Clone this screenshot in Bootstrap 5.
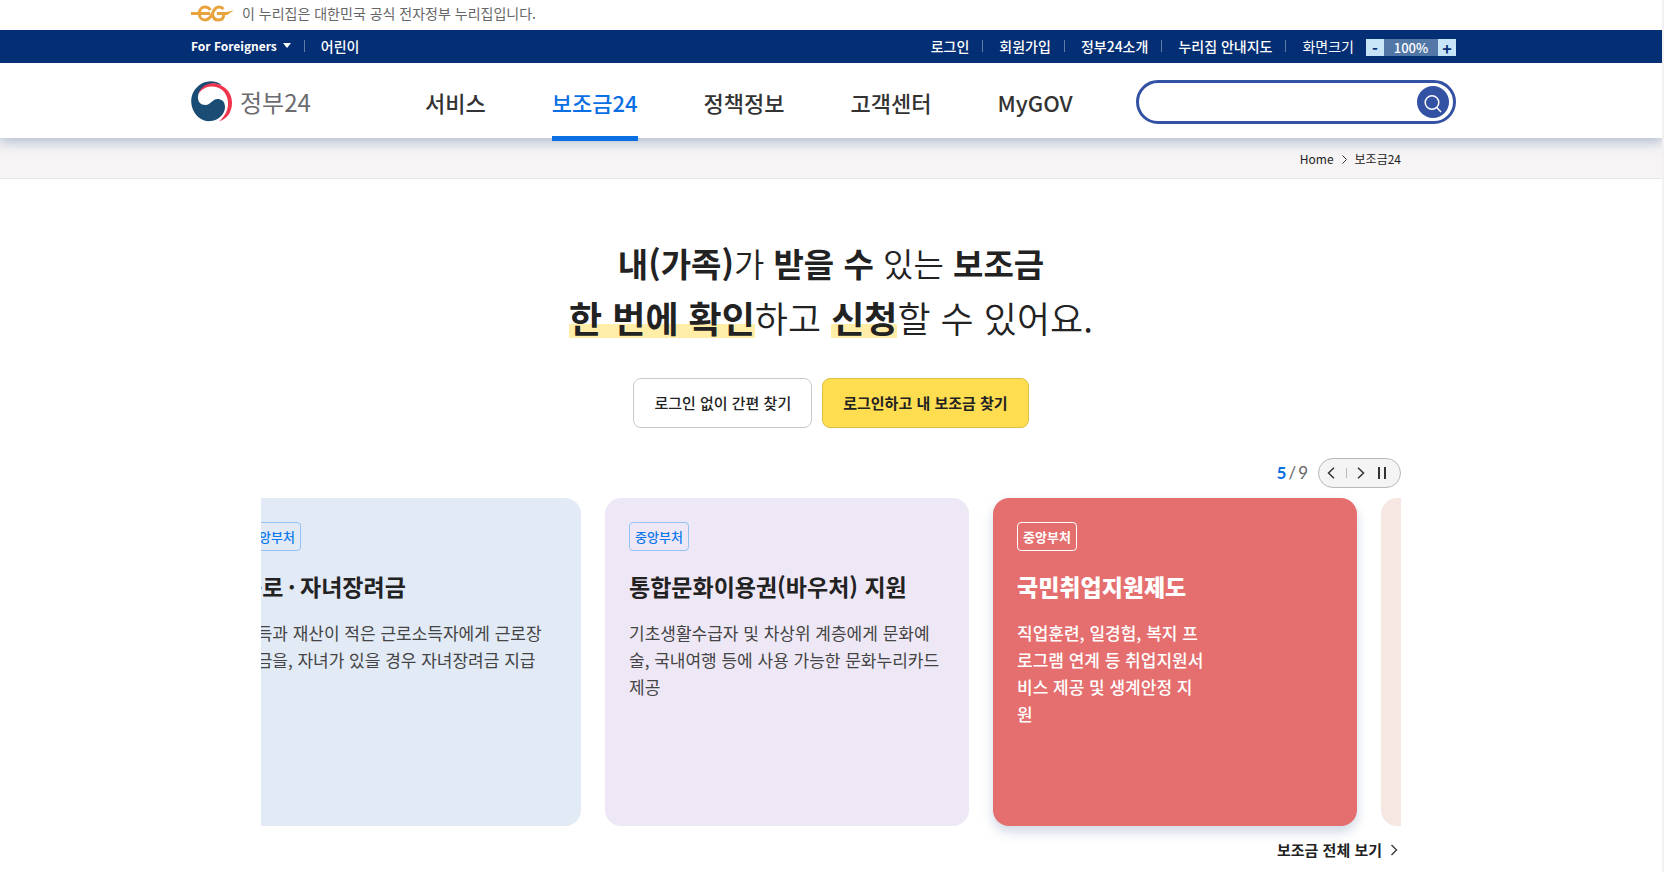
<!DOCTYPE html>
<html lang="ko">
<head>
<meta charset="utf-8">
<meta name="viewport" content="width=device-width, initial-scale=1">
<title>보조금24 | 정부24</title>
<link rel="stylesheet" href="https://cdn.jsdelivr.net/npm/bootstrap@5.3.0/dist/css/bootstrap.min.css">
<style>
  body { font-family: "Noto Sans CJK KR", "Noto Sans", sans-serif; color: #222; border-right: 2px solid #f1f1f1; line-height: 24px; }
  a { text-decoration: none; color: inherit; }
  .wrap-wide { max-width: 1280px; padding-right: 15px; }
  .wrap-main { max-width: 1140px; }

  .gov-bar { height: 30px; font-size: 14px; color: #666; padding-bottom: 4px; }
  .util-bar { background: #042f74; color: #fff; height: 33px; font-size: 14px; font-weight: 500; }
  .util-bar .util-row { height: 31px; }
  .util-bar li + li::before { content: ""; width: 1px; height: 12px; background: #5f7ca9; margin: 0 16px 0 13px; }
  .util-bar li { display: flex; align-items: center; }
  .util-bar .txt-latin { font-size: 12px; font-weight: 700; }
  .caret { width: 0; border: 4px solid transparent; border-top: 5px solid #fff; border-bottom: 0; margin-left: 6px; }
  .zoomer { height: 17px; width: 90px; background: #5378a8; font-size: 13px; margin: 4px 0 0 12px; }
  .zoomer button { width: 18px; height: 17px; border: 0; padding: 0; background: #c8e6f8; color: #042f74; font-weight: 700; font-size: 16px; line-height: 16px; }

  .site-head { height: 75px; background: #fff; box-shadow: 0 3px 12px 1px rgba(40,80,135,.34); z-index: 2; }
  .site-head .head-row { height: 75px; }
  .brand { font-size: 24px; color: #6b6b70; width: 234px; padding-top: 2px; }
  .gnb { gap: 66px; font-size: 22px; font-weight: 500; color: #333; }
  .gnb a { display: block; line-height: 78px; height: 78px; }
  .gnb .on { color: #0b6fe4; border-bottom: 5px solid #0b6fe4; }
  .search-box { width: 320px; height: 44px; border: 3px solid #3452a4; border-radius: 22px; padding: 0 4px 0 16px; margin-top: 17px; }
  .search-box input { border: 0; outline: 0; min-width: 0; background: transparent; }
  .search-box button { width: 32px; height: 32px; border: 0; border-radius: 50%; background: #3452a4; padding: 0; flex: none; }

  .crumb-bar { background: #f6f4f5; border-bottom: 1px solid #e6e6e6; font-size: 12px; color: #222; }
  .crumb-bar .wrap-main { height: 40px; padding-top: 2px; }

  .hero-title { font-size: 36px; line-height: 54px; font-weight: 350; color: #222; margin: 57px 0 34px; }
  .hero-title b { font-weight: 700; }
  .hero-title .line-top { font-size: 33px; }
  .hl { background: linear-gradient(transparent 64%, #ffeda8 64%, #ffeda8 90%, transparent 90%); }
  .cta-row { gap: 10px; }
  .cta { height: 50px; font-size: 15px; border-radius: 8px; padding: 0 20px; border: 1px solid #c9c9cd; font-weight: 500; color: #222; }
  .cta-main { background: #ffdd50; border-color: #dcbf45; font-weight: 700; }

  .slide-nav { height: 30px; margin: 30px 0 10px; }
  .count { font-size: 17px; color: #666; gap: 2px; font-family: Lato, "Noto Sans", sans-serif; margin-right: 10px; }
  .count b { color: #0b6fe4; font-weight: 700; }
  .pill { width: 83px; height: 30px; border: 1px solid #b8b8bb; border-radius: 15px; background: #f4f4f5; padding: 0 12px 0 6px; }
  .pill button { border: 0; background: none; padding: 0; width: 12px; line-height: 0; }
  .bar-v { width: 1px; height: 10px; background: #b8b8bb; }
  .slides { overflow-x: clip; }
  .track { gap: 24px; margin-left: -44px; }
  .slide { flex: 0 0 364px; height: 328px; border-radius: 16px; padding: 24px; white-space: nowrap; }
  .tag { display: inline-block; border: 1px solid #93c2f5; border-radius: 4px; color: #0b78ec; font-size: 13px; font-weight: 500; line-height: 27px; padding: 0 5px; }
  .slide h2 { font-size: 23px; line-height: 34px; font-weight: 700; margin: 18px 0 16px; }
  .slide p { font-size: 17px; line-height: 27px; color: #444; margin: 0; }
  .s-blue { background: #e2eaf6; }
  .s-violet { background: #eee8f6; }
  .s-red { background: #e56e6e; color: #fff; box-shadow: 0 6px 12px rgba(40,80,135,.22); }
  .s-red .tag { color: #fff; border-color: #fff; font-weight: 700; }
  .s-red h2 { font-weight: 900; }
  .s-red p { color: #fff; font-weight: 500; }
  .s-peach { background: #f6e7e3; }
  .more { font-size: 15px; font-weight: 700; margin-top: 12px; padding-right: 3px; }
</style>
</head>
<body class="min-vh-100">

<div class="gov-bar d-flex align-items-center">
  <div class="wrap-wide container-fluid ps-0 d-flex align-items-center">
    <svg width="43" height="17" viewBox="0 0 43 17" fill="none" stroke="#e8a33d" stroke-width="3" class="me-2" aria-hidden="true">
      <path d="M19.500 5C18 2.800 16 2 14 2C10.500 2 8.300 4.800 8.300 8.500C8.300 12.200 10.500 15 14 15C17.500 15 19.500 12.500 21.500 8.500C23 4.500 25.500 2 28 2C30 2 31.500 2.800 32.500 4"/>
      <path d="M0 8.500H19"/>
      <path d="M21.500 9C21.800 12.500 24 15 27.500 15C30.800 15 32.800 12.800 32.800 9"/>
      <path d="M26 7H36L43 5.200L36 10H26Z" fill="#e8a33d" stroke="none"/>
    </svg>
    <span>이 누리집은 대한민국 공식 전자정부 누리집입니다.</span>
  </div>
</div>

<div class="util-bar">
  <div class="util-row wrap-wide container-fluid ps-0 d-flex justify-content-between align-items-center">
    <ul class="list-unstyled d-flex mb-0">
      <li><a href="#" class="txt-latin d-flex align-items-center">For Foreigners <span class="caret"></span></a></li>
      <li><a href="#">어린이</a></li>
    </ul>
    <ul class="list-unstyled d-flex mb-0">
      <li><a href="#">로그인</a></li>
      <li><a href="#">회원가입</a></li>
      <li><a href="#">정부24소개</a></li>
      <li><a href="#">누리집 안내지도</a></li>
      <li><span class="fw-normal">화면크기</span>
        <div class="zoomer d-flex justify-content-between align-items-center">
          <button type="button" aria-label="축소">-</button><span>100%</span><button type="button" aria-label="확대">+</button>
        </div>
      </li>
    </ul>
  </div>
</div>

<header class="site-head position-relative">
  <div class="head-row wrap-wide container-fluid ps-0 d-flex">
    <a href="#" class="brand d-flex align-items-center flex-shrink-0">
      <svg width="41" height="41" viewBox="0 0 41 41" class="me-2" aria-hidden="true">
        <path d="M31 4C26 0 17 -1.500 10 3C2 8 -1.500 17 1 26C4 36 12 41 20 40C28 39 34 33 34 26C34 20 30 18 26.500 18C21 18 20 24 14.500 24C9 24 6.500 20 7 15C8 8 15 3 23 2.500Z" fill="#1b4c73"/>
        <path d="M7.500 13C10 5 19 0 28 3.500C37 7 41 14 41 22C41 31 36 38 28 40.500C34 35 37.500 29 37 21C36 10 28 5 20 5.500C14 6 10 9 7.500 13Z" fill="#f0344c"/>
      </svg>
      <span>정부24</span>
    </a>
    <nav class="gnb d-flex" aria-label="주 메뉴">
      <a href="#">서비스</a>
      <a href="#" class="on" aria-current="page">보조금24</a>
      <a href="#">정책정보</a>
      <a href="#">고객센터</a>
      <a href="#">MyGOV</a>
    </nav>
    <form class="search-box d-flex align-items-center ms-auto" role="search">
      <input type="search" class="flex-grow-1" aria-label="검색어">
      <button type="submit" aria-label="검색">
        <svg width="20" height="20" viewBox="0 0 20 20" fill="none" stroke="#fff" stroke-width="1.500"><circle cx="9" cy="8.500" r="6.800"/><path d="M13.800 13.500L18 18"/></svg>
      </button>
    </form>
  </div>
</header>

<nav class="crumb-bar" aria-label="현재 위치">
  <div class="wrap-main mx-auto d-flex justify-content-end align-items-center gap-2">
    <a href="#">Home</a>
    <svg width="5" height="9" viewBox="0 0 5 9" fill="none" stroke="#333"><path d="M.5 .5L4.500 4.500L.5 8.500"/></svg>
    <a href="#">보조금24</a>
  </div>
</nav>

<main class="wrap-main mx-auto">
  <h1 class="hero-title text-center">
    <span class="line-top d-block"><b>내(가족)</b>가 <b>받을 수</b> 있는 <b>보조금</b></span>
    <span class="d-block"><b class="hl">한 번에 확인</b>하고 <b class="hl">신청</b>할 수 있어요.</span>
  </h1>
  <div class="cta-row d-flex justify-content-center">
    <button type="button" class="btn cta bg-white">로그인 없이 간편 찾기</button>
    <button type="button" class="btn cta cta-main">로그인하고 내 보조금 찾기</button>
  </div>

  <div class="slide-nav d-flex justify-content-end align-items-center">
    <span class="count d-flex"><b>5</b><span>/</span><span>9</span></span>
    <div class="pill d-flex justify-content-between align-items-center">
      <button type="button" aria-label="이전"><svg width="8" height="12" viewBox="0 0 8 12" fill="none" stroke="#333" stroke-width="1.500"><path d="M7 .7L1.500 6L7 11.300"/></svg></button>
      <span class="bar-v"></span>
      <button type="button" aria-label="다음"><svg width="8" height="12" viewBox="0 0 8 12" fill="none" stroke="#333" stroke-width="1.500"><path d="M1 .7L6.500 6L1 11.300"/></svg></button>
      <button type="button" aria-label="정지"><svg width="10" height="12" viewBox="0 0 10 12" fill="#333"><path d="M1 0H3V12H1ZM7 0H9V12H7Z"/></svg></button>
    </div>
  </div>

  <div class="slides">
    <div class="track d-flex">
      <article class="slide s-blue">
        <span class="tag">중앙부처</span>
        <h2>근로&thinsp;·&thinsp;자녀장려금</h2>
        <p>소득과 재산이 적은 근로소득자에게 근로장<br>려금을, 자녀가 있을 경우 자녀장려금 지급</p>
      </article>
      <article class="slide s-violet">
        <span class="tag">중앙부처</span>
        <h2>통합문화이용권(바우처) 지원</h2>
        <p>기초생활수급자 및 차상위 계층에게 문화예<br>술, 국내여행 등에 사용 가능한 문화누리카드<br>제공</p>
      </article>
      <article class="slide s-red">
        <span class="tag">중앙부처</span>
        <h2>국민취업지원제도</h2>
        <p>직업훈련, 일경험, 복지 프<br>로그램 연계 등 취업지원서<br>비스 제공 및 생계안정 지<br>원</p>
      </article>
      <article class="slide s-peach"></article>
    </div>
  </div>
  <div class="more d-flex justify-content-end">
    <a href="#" class="d-flex align-items-center gap-2">보조금 전체 보기
      <svg width="8" height="12" viewBox="0 0 8 12" fill="none" stroke="#333" stroke-width="1.300"><path d="M1.500 1L6.500 6L1.500 11"/></svg></a>
  </div>
</main>
<script src="https://cdn.jsdelivr.net/npm/bootstrap@5.3.0/dist/js/bootstrap.bundle.min.js"></script>
</body>
</html>
